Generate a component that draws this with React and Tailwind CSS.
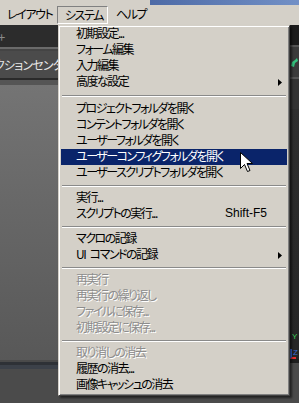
import React from 'react';

const FONT = { fontFamily: '"Noto Sans CJK JP", "Liberation Sans", sans-serif' };

const groups = [
  [
    { label: '初期設定...' },
    { label: 'フォーム編集' },
    { label: '入力編集' },
    { label: '高度な設定', sub: true },
  ],
  [
    { label: 'プロジェクトフォルダを開く' },
    { label: 'コンテントフォルダを開く' },
    { label: 'ユーザーフォルダを開く' },
    { label: 'ユーザーコンフィグフォルダを開く', active: true },
    { label: 'ユーザースクリプトフォルダを開く' },
  ],
  [
    { label: '実行...' },
    { label: 'スクリプトの実行...', shortcut: 'Shift-F5' },
  ],
  [
    { label: 'マクロの記録' },
    { label: 'UI\u2002コマンドの記録', sub: true },
  ],
  [
    { label: '再実行', disabled: true },
    { label: '再実行の繰り返し', disabled: true },
    { label: 'ファイルに保存...', disabled: true },
    { label: '初期設定に保存...', disabled: true },
  ],
  [
    { label: '取り消しの消去', disabled: true },
    { label: '履歴の消去...' },
    { label: '画像キャッシュの消去' },
  ],
];

const MenuItem = ({ item }) => {
  const color = item.active
    ? 'bg-[#0a246a] text-white'
    : item.disabled
    ? 'text-[#8d8d8d] [text-shadow:1px_1px_0_#ffffff]'
    : 'text-black';
  return (
    <div className={`flex items-center h-[16px] pl-[15px] pr-[4px] ${color}`}>
      <span className="flex-1 leading-[16px] -mt-[3px] whitespace-nowrap tracking-[-1.5px]">{item.label}</span>
      {item.shortcut && (
        <span className="mr-[16px] leading-[16px] -mt-[3px] font-['Liberation_Sans'] text-[12px]">{item.shortcut}</span>
      )}
      {item.sub && (
        <svg width="4" height="7" viewBox="0 0 4 7" className="mr-[1px]">
          <path d="M0 0 L4 3.5 L0 7 Z" fill="#000" />
        </svg>
      )}
    </div>
  );
};

const Separator = ({ first }) => (
  <div className={`${first ? 'h-[11px]' : 'h-[9px]'} flex items-center px-[1px]`}>
    <div className="w-full h-[2px] border-t border-[#8a8a8a] border-b border-b-white" />
  </div>
);

const Cursor = () => (
  <svg width="13" height="21" viewBox="0 0 13 21" className="absolute left-[240px] top-[152px]">
    <path
      d="M0.5 0.5 L0.5 16.5 L4.5 12.5 L7.5 19.5 L10 18.5 L7 11.5 L12.5 11.5 Z"
      fill="#fff"
      stroke="#000"
      strokeWidth="1"
      strokeLinejoin="miter"
    />
  </svg>
);

export default function App() {
  return (
    <div className="relative w-[299px] h-[403px] overflow-hidden bg-[#d4d0c8] text-[12px]" style={FONT}>
      {/* title strip */}
      <div className="flex h-[5px]">
        <div className="w-[150px] bg-[#d4d0c8]" />
        <div className="flex-1 bg-gradient-to-r from-[#4d6aa6] to-[#7290c6]" />
      </div>

      {/* menu bar */}
      <div className="flex items-center h-[20px] [font-feature-settings:'palt'] tracking-[-1.4px]">
        <div className="w-[57px] pl-[7px] leading-[18px] -mt-[2px]">レイアウト</div>
        <div className="h-[18px] w-[51px] pl-[7px] border border-t-[#808080] border-l-[#808080] border-b-white border-r-white leading-[15px]">
          システム
        </div>
        <div className="pl-[8px] leading-[18px] -mt-[2px]">ヘルプ</div>
      </div>

      {/* application behind */}
      <div className="flex h-[378px]">
        <div className="flex-1 flex flex-col">
          <div className="h-[22px] bg-[#2c2c2c] flex items-center text-[#8a8a8a] text-[13px] leading-none">
            <span className="-ml-[2px]">+</span>
          </div>
          <div className="h-[2px] bg-[#6a6a6a]" />
          <div className="h-[2px] bg-[#444]" />
          <div className="h-[27px] bg-[#4b4b4b] text-[#e6e6e6] flex items-center whitespace-nowrap [font-feature-settings:'palt'] tracking-[-0.8px] -ml-[6px]">
            クションセンタ
          </div>
          <div className="h-[2px] bg-[#2a2a2a]" />
          <div className="h-[5px] bg-[#555]" />
          <div className="flex-1 bg-gradient-to-b from-[#747474] to-[#585858]" />
          <div className="h-[2px] bg-[#4a4a4a]" />
          <div className="h-[3px] bg-[#2e3136]" />
          <div className="h-[4px] bg-[#3c4149]" />
          <div className="h-[34px] bg-[#4b4b4b]" />
        </div>
        <div className="w-[9px] flex flex-col bg-[#2b2b2b]">
          <div className="h-[20px] bg-[#1c1c1c]" />
          <div className="h-[2px] bg-[#555]" />
          <div className="h-[30px] bg-[#3b3b3b] flex items-center pl-[1px]">
            <svg width="7" height="9" viewBox="0 0 7 9">
              <path d="M6 0 L7 3 L4 5 L3 9 L0 8 L1 4 L4 2 Z" fill="#35c27e" />
            </svg>
          </div>
          <div className="h-[2px] bg-[#555]" />
          <div className="h-[30px] bg-[#333]" />
          <div className="flex-1 bg-gradient-to-b from-[#2f2f2f] to-[#262626]" />
          <div className="h-[14px] relative bg-[#262626]">
            <span className="absolute left-[2px] -top-[2px] text-[8px] text-[#3cd05a] leading-none font-['Liberation_Sans']">Y</span>
          </div>
          <div className="h-[10px] bg-[#262626] flex">
            <div className="w-[6px] border-l-2 border-b-2 border-l-[#3a6ad8] border-b-[#e03030] text-[8px] leading-none text-[#3a6ad8] pl-[1px] font-['Liberation_Sans']">Z</div>
          </div>
          <div className="h-[4px] bg-[#1e1e1e]" />
          <div className="h-[40px] bg-[#4a4a4a]" />
        </div>
      </div>

      {/* dropdown menu */}
      <div className="absolute left-[58px] top-[25px] w-[232px] pt-[0px] pb-[2px] px-[2px] bg-[#d4d0c8] border border-t-[#d4d0c8] border-l-[#d4d0c8] border-r-[#404040] border-b-[#404040] shadow-[inset_1px_1px_0_#ffffff,inset_-1px_-1px_0_#808080,2px_2px_2px_rgba(0,0,0,0.55)] [font-feature-settings:'palt']">
        {groups.map((g, gi) => (
          <div key={gi}>
            {gi > 0 && <Separator first={gi === 1} />}
            {g.map((item) => (
              <MenuItem key={item.label} item={item} />
            ))}
          </div>
        ))}
      </div>

      <Cursor />
    </div>
  );
}
